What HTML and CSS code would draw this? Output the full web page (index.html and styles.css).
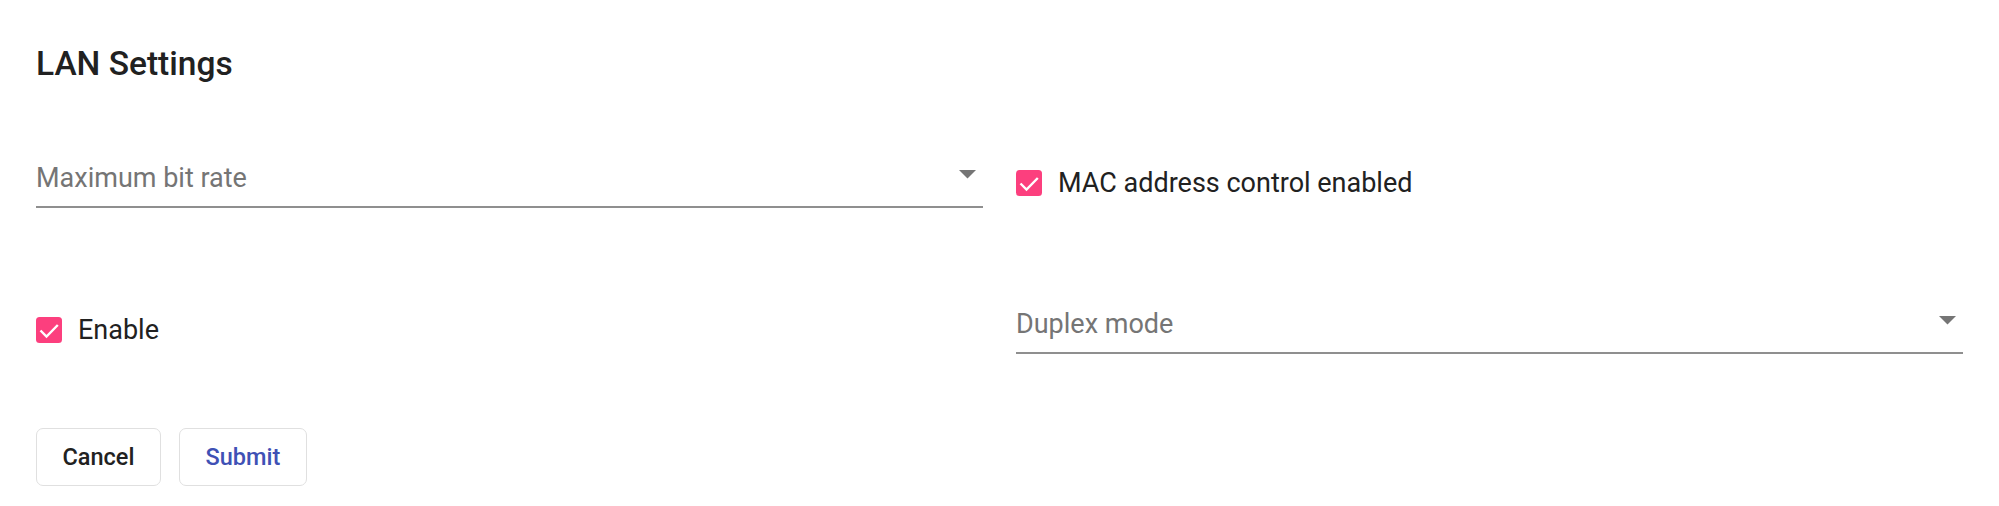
FILE: index.html
```html
<!DOCTYPE html>
<html>
<head>
<meta charset="utf-8">
<link rel="stylesheet" href="styles.css">
</head>
<body>
<div class="page">
  <h1 class="title">LAN Settings</h1>
  <div class="grid">
    <div class="select">
      <span class="select-label">Maximum bit rate</span>
      <svg class="arrow" width="17" height="9" viewBox="0 0 17 9"><path d="M0 0h17L8.5 8.5z" fill="#757575"/></svg>
    </div>
    <label class="check-row first">
      <svg class="checkbox" width="26" height="26" viewBox="0 0 26 26"><rect width="26" height="26" rx="3.5" fill="#fc3f7e"/><path d="M4.5 13.5l6 6L21.8 8" fill="none" stroke="#fff" stroke-width="2.4"/></svg>
      <span class="check-text">MAC address control enabled</span>
    </label>
    <label class="check-row second">
      <svg class="checkbox" width="26" height="26" viewBox="0 0 26 26"><rect width="26" height="26" rx="3.5" fill="#fc3f7e"/><path d="M4.5 13.5l6 6L21.8 8" fill="none" stroke="#fff" stroke-width="2.4"/></svg>
      <span class="check-text">Enable</span>
    </label>
    <div class="select">
      <span class="select-label">Duplex mode</span>
      <svg class="arrow" width="17" height="9" viewBox="0 0 17 9"><path d="M0 0h17L8.5 8.5z" fill="#757575"/></svg>
    </div>
  </div>
  <div class="actions">
    <button class="btn btn-cancel">Cancel</button>
    <button class="btn btn-submit">Submit</button>
  </div>
</div>
</body>
</html>
```
FILE: styles.css
```css
html, body {
  margin: 0;
  padding: 0;
  background: #fff;
}
.page {
  font-family: Roboto, "Liberation Sans", sans-serif;
  padding: 44px 36px 0 36px;
  color: #212121;
}
.title {
  margin: 0;
  font-size: 33.5px;
  line-height: 40px;
  font-weight: 500;
  color: #212121;
}
.grid {
  display: grid;
  grid-template-columns: 1fr 1fr;
  column-gap: 33px;
  row-gap: 100px;
  margin-top: 78px;
}
.select {
  display: flex;
  align-items: center;
  justify-content: space-between;
  padding-bottom: 12px;
  border-bottom: 2px solid #8f8f8f;
}
.select-label {
  font-size: 27px;
  line-height: 32px;
  color: #757575;
}
.arrow {
  display: block;
  margin-right: 7px;
  margin-top: -8px;
}
.check-row {
  display: flex;
  align-items: center;
  gap: 16px;
  align-self: start;
  height: 41px;
}
.check-row.second {
  height: 44px;
}
.checkbox {
  display: block;
  flex: none;
}
.check-text {
  font-size: 27px;
  line-height: 32px;
  color: #212121;
}
.actions {
  display: flex;
  gap: 18px;
  margin-top: 74px;
}
.btn {
  box-sizing: border-box;
  height: 58px;
  padding: 0 25.5px;
  border: 1.5px solid #e0e0e0;
  border-radius: 7px;
  background: #fff;
  font-family: Roboto, "Liberation Sans", sans-serif;
  font-size: 23.5px;
  font-weight: 500;
  cursor: pointer;
}
.btn-cancel {
  color: #212121;
}
.btn-submit {
  color: #3f51b5;
}
```
